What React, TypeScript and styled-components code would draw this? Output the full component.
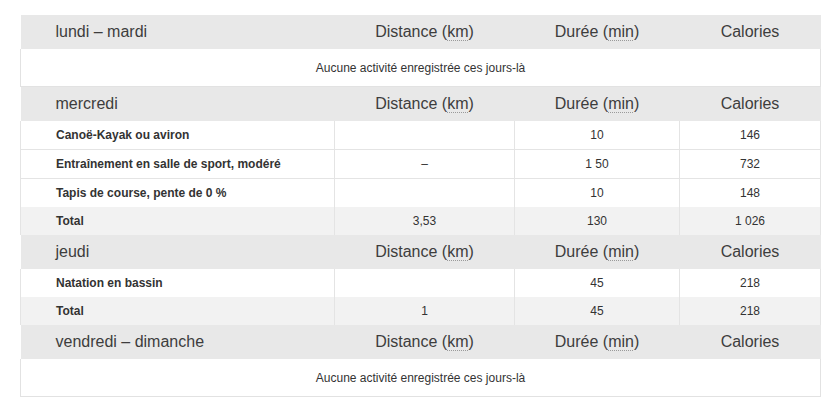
import styled, { createGlobalStyle } from "styled-components";

const GlobalStyle = createGlobalStyle`
  body {
    margin: 0;
    background: #ffffff;
    font-family: "Liberation Sans", Arial, Helvetica, sans-serif;
    color: #333333;
  }
`;

const Page = styled.div`
  padding: 15px 15px 0 20px;
`;

const Table = styled.table`
  width: 800px;
  border-collapse: collapse;
  table-layout: fixed;
`;

const HeadCell = styled.th<{ $first?: boolean }>`
  height: 34px;
  padding: 0;
  background: #e8e8e8;
  font-size: 16px;
  font-weight: normal;
  color: #3d3d3d;
  text-align: ${(p) => (p.$first ? "left" : "center")};
  padding-left: ${(p) => (p.$first ? "35px" : "0")};
`;

const Unit = styled.abbr`
  text-decoration: underline dotted #9a9a9a;
  text-underline-offset: 3px;
  text-decoration-thickness: 1px;
`;

const EmptyCell = styled.td`
  height: 37px;
  padding: 0;
  text-align: center;
  font-size: 12px;
  color: #333;
  border-left: 1px solid #e2e2e2;
  border-right: 1px solid #e2e2e2;
  border-bottom: 1px solid #e2e2e2;
`;

const Cell = styled.td<{ $total?: boolean; $name?: boolean; $divider?: boolean }>`
  height: 28px;
  padding: 0;
  font-size: 12px;
  color: #333;
  background: ${(p) => (p.$total ? "#f2f2f2" : "#ffffff")};
  border-left: 1px solid #e4e4e4;
  border-right: 1px solid #e4e4e4;
  border-top: ${(p) => (p.$divider ? "1px solid #e4e4e4" : "none")};
  text-align: ${(p) => (p.$name ? "left" : "center")};
  padding-left: ${(p) => (p.$name ? "35px" : "0")};
  font-weight: ${(p) => (p.$name ? "bold" : "normal")};
`;

type Activity = {
  name: string;
  distance?: string;
  duration: string;
  calories: string;
};

type Day = {
  label: string;
  activities: Activity[];
  total?: Activity;
};

const days: Day[] = [
  { label: "lundi – mardi", activities: [] },
  {
    label: "mercredi",
    activities: [
      { name: "Canoë-Kayak ou aviron", duration: "10", calories: "146" },
      {
        name: "Entraînement en salle de sport, modéré",
        distance: "–",
        duration: "1 50",
        calories: "732",
      },
      { name: "Tapis de course, pente de 0 %", duration: "10", calories: "148" },
    ],
    total: { name: "Total", distance: "3,53", duration: "130", calories: "1 026" },
  },
  {
    label: "jeudi",
    activities: [{ name: "Natation en bassin", duration: "45", calories: "218" }],
    total: { name: "Total", distance: "1", duration: "45", calories: "218" },
  },
  { label: "vendredi – dimanche", activities: [] },
];

function Row({ item, total, divider }: { item: Activity; total?: boolean; divider?: boolean }) {
  return (
    <tr>
      <Cell $name $total={total} $divider={divider}>
        {item.name}
      </Cell>
      <Cell $total={total} $divider={divider}>
        {item.distance ?? ""}
      </Cell>
      <Cell $total={total} $divider={divider}>
        {item.duration}
      </Cell>
      <Cell $total={total} $divider={divider}>
        {item.calories}
      </Cell>
    </tr>
  );
}

export default function App() {
  return (
    <>
      <GlobalStyle />
      <Page>
        <Table>
          <colgroup>
            <col style={{ width: 314 }} />
            <col style={{ width: 180 }} />
            <col style={{ width: 165 }} />
            <col style={{ width: 141 }} />
          </colgroup>
          {days.map((day, i) => (
            <tbody key={i}>
              <tr>
                <HeadCell $first>{day.label}</HeadCell>
                <HeadCell>
                  Distance (<Unit title="kilomètres">km</Unit>)
                </HeadCell>
                <HeadCell>
                  Durée (<Unit title="minutes">min</Unit>)
                </HeadCell>
                <HeadCell>Calories</HeadCell>
              </tr>
              {day.activities.length === 0 ? (
                <tr>
                  <EmptyCell colSpan={4}>Aucune activité enregistrée ces jours-là</EmptyCell>
                </tr>
              ) : (
                day.activities.map((a, j) => <Row key={j} item={a} divider={j > 0} />)
              )}
              {day.total ? <Row item={day.total} total /> : null}
            </tbody>
          ))}
        </Table>
      </Page>
    </>
  );
}
